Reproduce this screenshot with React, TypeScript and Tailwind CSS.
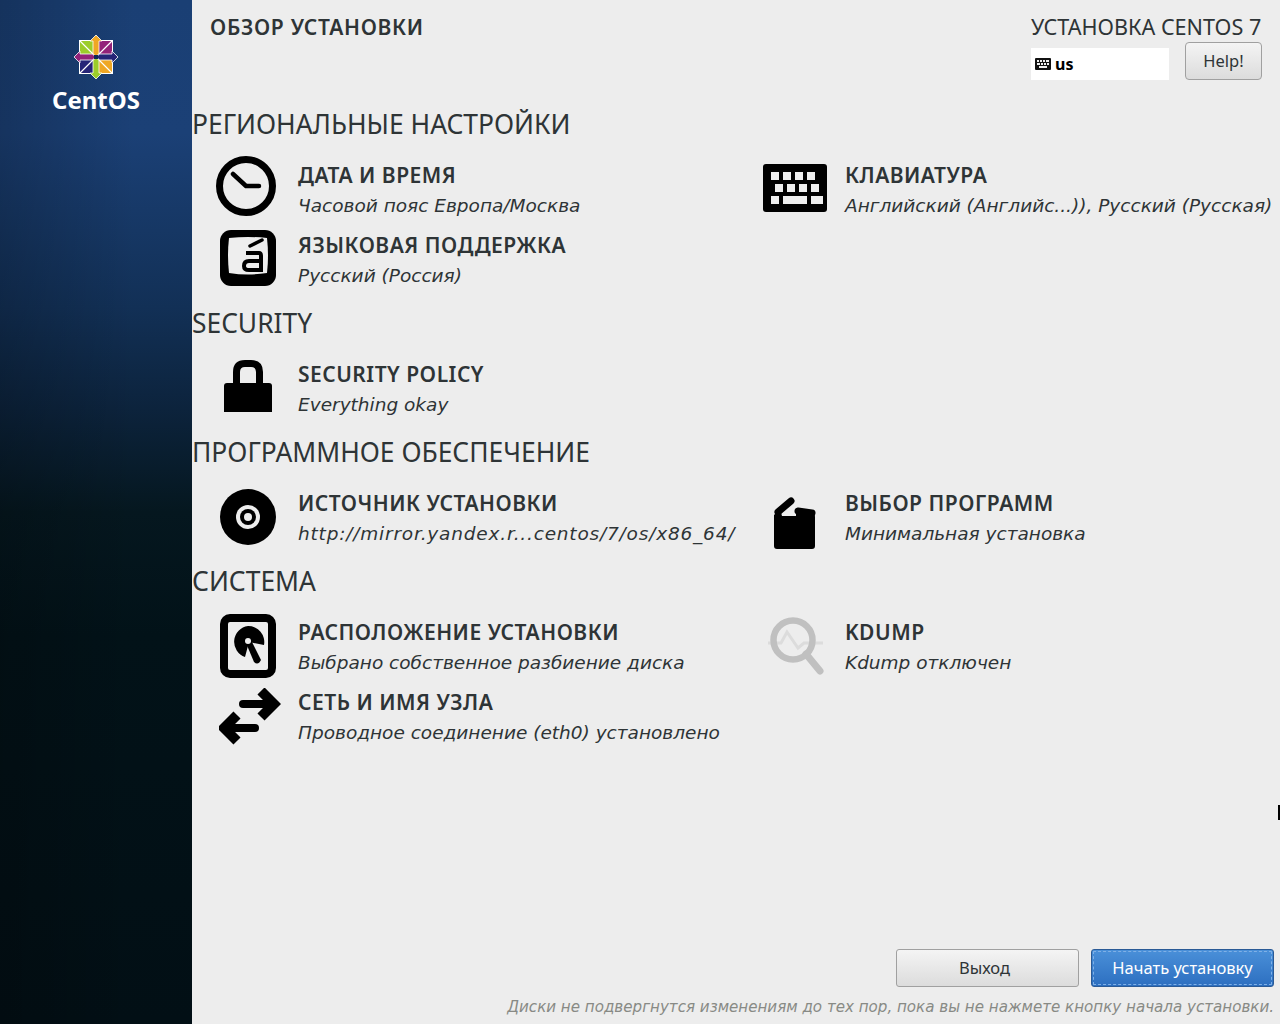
const font = "font-['Noto_Sans','DejaVu_Sans',sans-serif]";
const oblique = "font-['DejaVu_Sans',sans-serif] italic";

const ClockIcon = () => (
  <svg className="ml-[-4px] mt-[5px]" width="60" height="60" viewBox="0 0 60 60" fill="none" stroke="#000">
    <circle cx="30" cy="30" r="26.5" strokeWidth="7" />
    <path d="M17 18 L30 30 H43" strokeWidth="4.5" strokeLinecap="round" strokeLinejoin="round" />
  </svg>
);

const LangIcon = () => (
  <svg className="mt-[9px]" width="56" height="56" viewBox="0 0 56 56">
    <rect width="56" height="56" rx="11" fill="#000" />
    <path d="M9 8 Q28 6 47 8 Q49 26 47 43 Q28 46 9 43 Q7 25 9 8Z" fill="#eee" />
    <path d="M30 16 L42 10" stroke="#000" strokeWidth="3.5" strokeLinecap="round" />
    <path d="M26 23 H39 Q41 23 41 26 V40 H29 Q24 40 24 36 Q24 31 29 31 H40" fill="none" stroke="#000" strokeWidth="4" />
  </svg>
);

const LockIcon = () => (
  <svg className="mt-[10px]" width="48" height="52" viewBox="0 0 48 52">
    <path d="M12.5 26 V12 Q12.5 3.5 21 3.5 H27 Q35.5 3.5 35.5 12 V26" fill="none" stroke="#000" strokeWidth="7" />
    <path d="M3 23 H45 Q48 23 48 26 V52 H0 V26 Q0 23 3 23Z" fill="#000" />
  </svg>
);

const DiscIcon = () => (
  <svg className="mt-[10px]" width="56" height="56" viewBox="0 0 56 56">
    <circle cx="28" cy="28" r="28" fill="#000" />
    <circle cx="28" cy="28" r="12" fill="#eee" />
    <circle cx="28" cy="28" r="8" fill="#000" />
    <circle cx="28" cy="28" r="4" fill="#eee" />
  </svg>
);

const HddIcon = () => (
  <svg className="mt-[6px]" width="56" height="64" viewBox="0 0 56 64">
    <rect x="4" y="4" width="48" height="56" rx="6" fill="none" stroke="#000" strokeWidth="8" />
    <path d="M28 12 A16 16 0 0 1 44 31 L29 28 L25 43 A16 16 0 0 1 28 12Z" fill="#000" />
    <path d="M26 29 L31 26 L41 46 Q38 52 34 48Z" fill="#000" />
    <circle cx="28" cy="27" r="3" fill="#eee" />
  </svg>
);

const ArrowsIcon = () => (
  <svg className="ml-[4px] mt-[10px]" width="62" height="58" viewBox="0 0 62 58" fill="none" stroke="#000" strokeLinecap="round">
    <path d="M24 16 H50" strokeWidth="8" />
    <path d="M42 3 L55 16 L42 29" strokeWidth="10" strokeLinecap="butt" />
    <path d="M36 40 H10" strokeWidth="8" />
    <path d="M18 27 L5 40 L18 53" strokeWidth="10" strokeLinecap="butt" />
  </svg>
);

const KeyboardIcon = () => (
  <svg className="mt-[13px]" width="64" height="48" viewBox="0 0 64 48">
    <rect width="64" height="48" rx="3" fill="#000" />
    <g fill="#eee">
      <rect x="8" y="8" width="8" height="8" />
      <rect x="20" y="8" width="8" height="8" />
      <rect x="32" y="8" width="8" height="8" />
      <rect x="44" y="8" width="8" height="8" />
      <rect x="12" y="20" width="8" height="8" />
      <rect x="24" y="20" width="8" height="8" />
      <rect x="36" y="20" width="8" height="8" />
      <rect x="48" y="20" width="8" height="8" />
      <rect x="8" y="32" width="8" height="8" />
      <rect x="20" y="32" width="24" height="8" />
      <rect x="48" y="32" width="12" height="8" />
    </g>
  </svg>
);

const PackageIcon = () => (
  <svg className="mt-[18px]" width="42" height="52" viewBox="0 0 42 52">
    <path d="M0 18 L6 12 L8 19 H22 V15 H38 Q41 16 41 20 V49 Q41 52 38 52 H3 Q0 52 0 49Z" fill="#000" />
    <path d="M8 19 L15 11 L22 19Z" fill="#eee" />
    <path d="M4 15 L17 4" stroke="#000" strokeWidth="7" strokeLinecap="round" />
    <path d="M24 14 L38 16" stroke="#000" strokeWidth="7" strokeLinecap="round" />
  </svg>
);

const KdumpIcon = () => (
  <svg className="ml-[2px] mt-[9px]" width="58" height="60" viewBox="0 0 58 60" fill="none">
    <path d="M1 26 H14 L20 15 L31 31 L37 26 H56" stroke="#dcdcdc" strokeWidth="3" />
    <circle cx="26" cy="23" r="19.5" stroke="#c0c0c0" strokeWidth="6.5" />
    <path d="M39 37 L53 54" stroke="#c0c0c0" strokeWidth="7" strokeLinecap="round" />
  </svg>
);

const SmallKeyboard = () => (
  <svg width="16" height="12" viewBox="0 0 16 12">
    <rect width="16" height="12" rx="1" fill="#111" />
    <g fill="#eee">
      <rect x="2" y="2" width="2" height="2" />
      <rect x="5" y="2" width="2" height="2" />
      <rect x="8" y="2" width="2" height="2" />
      <rect x="11" y="2" width="3" height="2" />
      <rect x="2" y="5" width="3" height="2" />
      <rect x="6" y="5" width="2" height="2" />
      <rect x="9" y="5" width="2" height="2" />
      <rect x="12" y="5" width="2" height="2" />
      <rect x="4" y="8" width="8" height="2" />
    </g>
  </svg>
);

const CentosLogo = () => (
  <svg width="46" height="46" viewBox="0 0 46 46">
    <g transform="translate(23 23)">
      <rect x="-17" y="-17" width="34" height="34" fill="#fff" />
      <rect x="-16" y="-16" width="15" height="15" fill="#9ccd2a" />
      <rect x="1" y="-16" width="15" height="15" fill="#932279" />
      <rect x="1" y="1" width="15" height="15" fill="#efa724" />
      <rect x="-16" y="1" width="15" height="15" fill="#262577" />
      <path d="M0 -22 L6 -16 H3 V-3 L0 -1 L-3 -3 V-16 H-6Z" fill="#efa724" stroke="#fff" strokeWidth="0.8" />
      <path d="M22 0 L16 6 V3 H3 L1 0 L3 -3 H16 V-6Z" fill="#262577" stroke="#fff" strokeWidth="0.8" />
      <path d="M0 22 L-6 16 H-3 V3 L0 1 L3 3 V16 H6Z" fill="#9ccd2a" stroke="#fff" strokeWidth="0.8" />
      <path d="M-22 0 L-16 -6 V-3 H-3 L-1 0 L-3 3 H-16 V6Z" fill="#932279" stroke="#fff" strokeWidth="0.8" />
      <path d="M-16 -16 L-3 -3 M16 -16 L3 -3 M16 16 L3 3 M-16 16 L-3 3" stroke="#fff" strokeWidth="1.2" />
      <rect x="-2" y="-2" width="4" height="4" fill="#0d2a55" />
    </g>
  </svg>
);

type ItemProps = {
  icon: React.ReactNode;
  title: string;
  status: string;
  statusClass?: string;
};

const Item = ({ icon, title, status, statusClass = "" }: ItemProps) => (
  <div className="flex h-[70px] items-start">
    <div className="flex h-[70px] w-[106px] shrink-0 items-start justify-center pl-[6px]">{icon}</div>
    <div className="min-w-0 whitespace-nowrap">
      <div className="pt-[10px] text-[21px] leading-[28px] font-semibold tracking-[0.5px] text-[#2e3436]">{title}</div>
      <div className={`mt-[3px] text-[18.5px] leading-[28px] text-[#2e3436] ${oblique} ${statusClass}`}>{status}</div>
    </div>
  </div>
);

const Section = ({ title, children }: { title: string; children: React.ReactNode }) => (
  <section className="mb-[15px]">
    <h2 className="mb-[10px] h-[34px] whitespace-nowrap text-[26.4px] leading-[34px] font-normal text-[#2e3436]">{title}</h2>
    <div className="grid grid-cols-[547px_1fr]">{children}</div>
  </section>
);

export default function App() {
  return (
    <div className={`relative flex h-[1024px] w-[1280px] overflow-hidden bg-[#ededed] ${font}`}>
      <aside className="flex w-[192px] shrink-0 flex-col items-center bg-[linear-gradient(90deg,rgba(0,0,0,0.2),transparent_70%),linear-gradient(180deg,#1a3f74_0%,#1b4076_13%,#123056_30%,#0c233c_40%,#05171f_50%,#021218_62%,#020f15_100%)] pt-[34px]">
        <CentosLogo />
        <div className="mt-[3px] text-[24px] leading-[34px] font-bold text-white">CentOS</div>
      </aside>
      <main className="flex min-w-0 flex-1 flex-col">
        <header className="flex h-[107px] items-start justify-between pl-[18px] pr-[18px]">
          <h1 className="mt-[13px] whitespace-nowrap text-[21px] leading-[28px] font-semibold tracking-[0.7px] text-[#2e3436]">ОБЗОР УСТАНОВКИ</h1>
          <div className="mt-[13px] flex w-[231px] flex-col">
            <div className="mb-[1px] whitespace-nowrap text-[21.6px] leading-[28px] text-[#2e3436]">УСТАНОВКА CENTOS 7</div>
            <div className="flex items-start justify-between">
              <div className="mt-[6px] flex h-[32px] w-[138px] items-center gap-[4px] bg-white pl-[4px] text-[16px] font-bold text-black">
                <SmallKeyboard />
                us
              </div>
              <button className="h-[38px] w-[77px] rounded-[4px] border border-[#a0a0a0] bg-gradient-to-b from-[#f4f4f4] to-[#dcdcdc] text-[16.5px] text-[#2e3436]">Help!</button>
            </div>
          </div>
        </header>

        <Section title="РЕГИОНАЛЬНЫЕ НАСТРОЙКИ">
          <Item icon={<ClockIcon />} title="ДАТА И ВРЕМЯ" status="Часовой пояс Европа/Москва" />
          <Item icon={<KeyboardIcon />} title="КЛАВИАТУРА" status="Английский (Английс...)), Русский (Русская)" />
          <Item icon={<LangIcon />} title="ЯЗЫКОВАЯ ПОДДЕРЖКА" status="Русский (Россия)" />
        </Section>
        <Section title="SECURITY">
          <Item icon={<LockIcon />} title="SECURITY POLICY" status="Everything okay" />
        </Section>
        <Section title="ПРОГРАММНОЕ ОБЕСПЕЧЕНИЕ">
          <Item icon={<DiscIcon />} title="ИСТОЧНИК УСТАНОВКИ" status="http://mirror.yandex.r...centos/7/os/x86_64/" statusClass="tracking-[0.8px]" />
          <Item icon={<PackageIcon />} title="ВЫБОР ПРОГРАММ" status="Минимальная установка" />
        </Section>
        <Section title="СИСТЕМА">
          <Item icon={<HddIcon />} title="РАСПОЛОЖЕНИЕ УСТАНОВКИ" status="Выбрано собственное разбиение диска" />
          <Item icon={<KdumpIcon />} title="KDUMP" status="Kdump отключен" />
          <Item icon={<ArrowsIcon />} title="СЕТЬ И ИМЯ УЗЛА" status="Проводное соединение (eth0) установлено" />
        </Section>

        <footer className="mt-auto flex flex-col items-end pr-[6px]">
          <div className="flex gap-[12px]">
            <button className="h-[38px] w-[183px] rounded-[3px] border border-[#a0a0a0] bg-gradient-to-b from-[#f4f4f4] to-[#dcdcdc] pr-[6px] text-[16.5px] text-[#2e3436]">Выход</button>
            <button className="h-[38px] w-[183px] rounded-[3px] border border-[#2a5a96] bg-gradient-to-b from-[#4a90d9] to-[#2d6fc0] text-[16.5px] text-white outline outline-1 outline-dashed outline-offset-[-3px] outline-[#7fb0e6]">Начать установку</button>
          </div>
          <p className={`mt-[8px] mb-[5px] whitespace-nowrap text-[15.1px] leading-[24px] text-[#888a85] ${oblique}`}>Диски не подвергнутся изменениям до тех пор, пока вы не нажмете кнопку начала установки.</p>
        </footer>
      </main>
      <div className="absolute right-0 top-[805px] h-[15px] w-[2px] bg-black" />
    </div>
  );
}
